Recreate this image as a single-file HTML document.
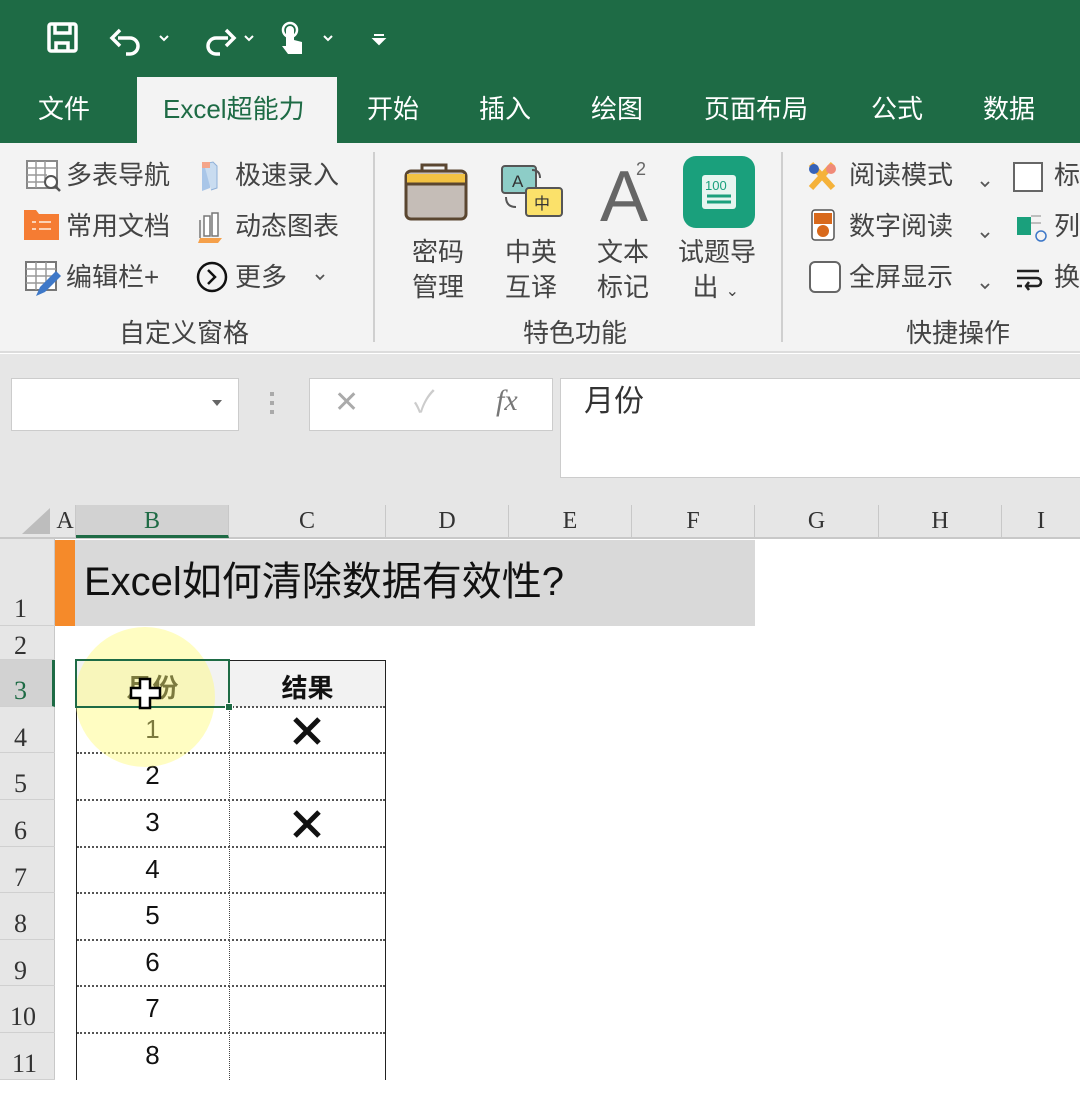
<!DOCTYPE html>
<html><head><meta charset="utf-8"><style>
*{margin:0;padding:0;box-sizing:border-box}
body{width:1080px;height:1080px;overflow:hidden;background:#fff;position:relative;font-family:"Liberation Sans","Noto Sans CJK SC",sans-serif;color:#333}
.a{position:absolute}
.t{position:absolute;white-space:nowrap;font-size:26px;line-height:30px}
.w{color:#fff}
.g{color:#444}
.ch{position:absolute;top:505px;height:33px;font-family:"Liberation Serif",serif;font-size:24px;line-height:33px;text-align:center;color:#333;border-right:1px solid #c8c8c8}
.rh{position:absolute;left:0;width:55px;font-family:"Liberation Serif",serif;font-size:26px;color:#333;padding-left:14px;border-bottom:1px solid #d0d0d0}
.cell{position:absolute;text-align:center;font-size:26px;color:#111}
</style></head><body>
<div class="a" style="left:0;top:0;width:1080px;height:143px;background:#1e6b45"></div>
<svg class="a" style="left:40px;top:18px" width="360" height="42" viewBox="0 0 360 42">
 <g fill="none" stroke="#fff" stroke-width="3.5">
  <rect x="9" y="6" width="27" height="27" rx="2"/>
  <path d="M15 6v9h15V6M16 33v-8h12v8"/>
  <path d="M78 20h12a8 8 0 0 1 0 16h-4M80 12l-8 8 8 8"/>
  <path d="M188 20h-12a8 8 0 0 0 0 16h4M186 12l8 8-8 8"/>
 </g>
 <g fill="none" stroke="#fff" stroke-width="2"><path d="M120 18l4 4 4-4M205 18l4 4 4-4M284 18l4 4 4-4"/></g>
 <path d="M246 28V12a4 4 0 0 1 8 0v10l8 2v12h-14l-6-8z" fill="#fff"/>
 <circle cx="250" cy="12" r="7" fill="none" stroke="#fff" stroke-width="2.5"/>
 <path d="M334 17h10M334 21l5 5 5-5z" stroke="#fff" stroke-width="2" fill="#fff"/>
</svg>
<div class="a" style="left:137px;top:77px;width:200px;height:70px;background:#f3f3f3"></div>
<div class="t w" style="left:38px;top:94px">文件</div>
<div class="t" style="left:163px;top:94px;color:#1e6b45">Excel超能力</div>
<div class="t w" style="left:367px;top:94px">开始</div>
<div class="t w" style="left:479px;top:94px">插入</div>
<div class="t w" style="left:591px;top:94px">绘图</div>
<div class="t w" style="left:704px;top:94px">页面布局</div>
<div class="t w" style="left:871px;top:94px">公式</div>
<div class="t w" style="left:983px;top:94px">数据</div>
<div class="a" style="left:0;top:143px;width:1080px;height:210px;background:#f3f3f3;border-bottom:2px solid #dcdcdc"></div>
<div class="a" style="left:373px;top:152px;width:2px;height:190px;background:#cfcfcf"></div>
<div class="a" style="left:781px;top:152px;width:2px;height:190px;background:#cfcfcf"></div>
<svg class="a" style="left:22px;top:158px" width="340" height="140" viewBox="0 0 340 140">
 <rect x="5" y="3" width="30" height="27" fill="#fff" stroke="#888" stroke-width="2"/>
 <path d="M5 10h30M5 17h20M5 24h18M14 3v27M23 3v18" stroke="#999" stroke-width="1.5"/>
 <circle cx="29" cy="24" r="6" fill="#fff" stroke="#555" stroke-width="2"/><path d="M33 28l5 5" stroke="#555" stroke-width="2.5"/>
 <path d="M2 52h12l3 4h20v26H2z" fill="#f57c33"/><path d="M10 64h4M17 64h12M10 71h4M17 71h12" stroke="#fcd2b5" stroke-width="2"/>
 <rect x="4" y="104" width="30" height="28" fill="#fff" stroke="#777" stroke-width="2"/><path d="M4 111h30M4 118h30M4 125h20M14 104v28M24 104v20" stroke="#999" stroke-width="1.5"/>
 <path d="M14 138l4-9 16-16 5 5-16 16z" fill="#3e78c8"/>
 <path d="M180 4l8 2v24l-8 3z" fill="#a9c6e8"/><path d="M182 6l9-2 4 4v22l-6 2" fill="#c9dcf0" stroke="#8fb0d8"/><path d="M180 4h8v6h-8z" fill="#f4a58a"/>
 <path d="M182 58h6v20h-6zM190 55h6v23h-6z" fill="#fff" stroke="#777" stroke-width="1.5"/><path d="M178 80h22l-4 5h-20z" fill="#f5a04a"/><path d="M178 80v-18" stroke="#777" stroke-width="1.5"/>
 <circle cx="190" cy="119" r="14" fill="none" stroke="#111" stroke-width="2.5"/><path d="M186 112l7 7-7 7" fill="none" stroke="#111" stroke-width="2.5"/>
 <path d="M294 117l4 4 4-4" fill="none" stroke="#555" stroke-width="1.8"/>
</svg>
<div class="t g" style="left:66px;top:160px">多表导航</div>
<div class="t g" style="left:66px;top:211px">常用文档</div>
<div class="t g" style="left:66px;top:262px">编辑栏+</div>
<div class="t g" style="left:235px;top:160px">极速录入</div>
<div class="t g" style="left:235px;top:211px">动态图表</div>
<div class="t g" style="left:235px;top:262px">更多</div>
<div class="t g" style="left:119px;top:318px">自定义窗格</div>
<svg class="a" style="left:400px;top:155px" width="360" height="80" viewBox="0 0 360 80">
 <path d="M22 16v-6h24v6" fill="none" stroke="#5a4630" stroke-width="3"/>
 <rect x="6" y="16" width="60" height="48" rx="5" fill="#c5bdb7" stroke="#5a4630" stroke-width="3"/>
 <path d="M7 19h58v10H7z" fill="#f2c243"/><path d="M6 29h60" stroke="#5a4630" stroke-width="3"/>
 <rect x="102" y="11" width="34" height="27" rx="3" fill="#8dcdc7" stroke="#555" stroke-width="2"/>
 <text x="112" y="32" font-size="17" font-family="Liberation Sans" fill="#333">A</text>
 <rect x="126" y="33" width="36" height="28" rx="3" fill="#fbe16a" stroke="#555" stroke-width="2"/>
 <text x="134" y="54" font-size="16" font-family="Noto Sans CJK SC" fill="#333">中</text>
 <path d="M132 15q8 0 8 8M106 42q0 10 10 10" fill="none" stroke="#555" stroke-width="2"/>
 <text x="200" y="66" font-size="72" font-family="Liberation Sans" fill="#666">A</text>
 <text x="236" y="20" font-size="18" font-family="Liberation Sans" fill="#666">2</text>
 <rect x="283" y="1" width="72" height="72" rx="13" fill="#1aa07c"/>
 <rect x="302" y="20" width="34" height="34" rx="3" fill="#e6f5f0"/>
 <text x="305" y="35" font-size="13" font-family="Liberation Sans" fill="#1aa07c">100</text>
 <path d="M307 41h24M307 47h24" stroke="#1aa07c" stroke-width="3"/>
</svg>
<div class="t g" style="left:412px;top:235px;line-height:35px">密码<br>管理</div>
<div class="t g" style="left:505px;top:235px;line-height:35px">中英<br>互译</div>
<div class="t g" style="left:597px;top:235px;line-height:35px">文本<br>标记</div>
<div class="t g" style="left:678px;top:235px;line-height:35px">试题导<br>&nbsp;&nbsp;出 <span style="font-size:16px">⌄</span></div>
<div class="t g" style="left:523px;top:318px">特色功能</div>
<svg class="a" style="left:805px;top:158px" width="275" height="140" viewBox="0 0 275 140">
 <path d="M6 6l22 24M28 6L6 30" stroke="#f5b23a" stroke-width="6"/><circle cx="9" cy="11" r="5" fill="#3662b8"/><circle cx="26" cy="11" r="5" fill="#f08a78"/>
 <rect x="7" y="52" width="22" height="30" rx="3" fill="#fff" stroke="#555" stroke-width="1.5"/><rect x="9" y="55" width="18" height="11" fill="#d8691c"/><circle cx="18" cy="73" r="6" fill="#d8691c"/>
 <rect x="5" y="104" width="30" height="30" rx="5" fill="#fff" stroke="#666" stroke-width="2"/>
 <path d="M176 24l4 4 4-4M176 75l4 4 4-4M176 126l4 4 4-4" fill="none" stroke="#555" stroke-width="1.8"/>
 <rect x="209" y="5" width="28" height="28" fill="#fff" stroke="#666" stroke-width="2"/>
 <rect x="212" y="59" width="14" height="18" fill="#1aa07c"/><path d="M226 58h10M226 65h10" stroke="#888"/><circle cx="236" cy="78" r="5" fill="none" stroke="#3e78c8" stroke-width="1.5"/>
 <path d="M212 113h22M212 120h20a4 4 0 0 1 0 8h-10M212 128h5M224 124l-3 4 3 4" fill="none" stroke="#222" stroke-width="2.5"/>
</svg>
<div class="t g" style="left:849px;top:160px">阅读模式</div>
<div class="t g" style="left:849px;top:211px">数字阅读</div>
<div class="t g" style="left:849px;top:262px">全屏显示</div>
<div class="t g" style="left:1054px;top:160px">标</div>
<div class="t g" style="left:1054px;top:211px">列</div>
<div class="t g" style="left:1054px;top:262px">换</div>
<div class="t g" style="left:906px;top:318px">快捷操作</div>
<div class="a" style="left:0;top:354px;width:1080px;height:151px;background:#e6e6e6"></div>
<div class="a" style="left:11px;top:378px;width:228px;height:53px;background:#fff;border:1px solid #ccc"></div>
<div class="a" style="left:212px;top:400px;width:0;height:0;border:5px solid transparent;border-top:6px solid #666"></div>
<div class="a" style="left:270px;top:392px;width:4px;height:24px;background:repeating-linear-gradient(#aaa 0 4px,transparent 4px 9px)"></div>
<div class="a" style="left:309px;top:378px;width:244px;height:53px;background:#fff;border:1px solid #ccc"></div>
<div class="t" style="left:334px;top:388px;font-size:30px;color:#aaa">✕</div>
<div class="t" style="left:414px;top:388px;font-size:30px;color:#ccc">✓</div>
<div class="t" style="left:496px;top:386px;font-size:30px;font-family:'Liberation Serif',serif;font-style:italic;color:#777">fx</div>
<div class="a" style="left:560px;top:378px;width:530px;height:100px;background:#fff;border:1px solid #ccc"></div>
<div class="t" style="left:584px;top:387px;font-size:30px;color:#333">月份</div>
<div class="a" style="left:0;top:505px;width:1080px;height:34px;background:#e6e6e6;border-bottom:2px solid #c8c8c8"></div>
<div class="a" style="left:22px;top:508px;width:0;height:0;border-left:28px solid transparent;border-bottom:26px solid #bdbdbd"></div>
<div class="ch" style="left:55px;width:21px">A</div>
<div class="ch" style="left:76px;width:153px;background:#d2d2d2;color:#1e6b45;border-bottom:3px solid #1e6b45">B</div>
<div class="ch" style="left:229px;width:157px">C</div>
<div class="ch" style="left:386px;width:123px">D</div>
<div class="ch" style="left:509px;width:123px">E</div>
<div class="ch" style="left:632px;width:123px">F</div>
<div class="ch" style="left:755px;width:124px">G</div>
<div class="ch" style="left:879px;width:123px">H</div>
<div class="ch" style="left:1002px;width:78px;border:none">I</div>
<div class="a" style="left:0;top:539px;width:55px;height:541px;background:#e6e6e6;border-right:1px solid #c8c8c8"></div>
<div class="rh" style="top:539px;height:87px;line-height:140px">1</div>
<div class="rh" style="top:626px;height:34px;line-height:40px">2</div>
<div class="rh" style="top:660px;height:47px;line-height:62px;background:#d2d2d2;color:#1e6b45;border-right:3px solid #1e6b45">3</div>
<div class="rh" style="top:707px;height:46px;line-height:62px">4</div>
<div class="rh" style="top:753px;height:47px;line-height:62px">5</div>
<div class="rh" style="top:800px;height:47px;line-height:62px">6</div>
<div class="rh" style="top:847px;height:46px;line-height:62px">7</div>
<div class="rh" style="top:893px;height:47px;line-height:62px">8</div>
<div class="rh" style="top:940px;height:46px;line-height:62px">9</div>
<div class="rh" style="top:986px;height:47px;line-height:62px;padding-left:10px">10</div>
<div class="rh" style="top:1033px;height:47px;line-height:62px;padding-left:12px">11</div>
<div class="a" style="left:55px;top:540px;width:700px;height:86px;background:#d9d9d9"></div>
<div class="a" style="left:55px;top:540px;width:20px;height:86px;background:#f58a2a"></div>
<div class="t" style="left:84px;top:559px;font-size:40px;line-height:46px;color:#111">Excel如何清除数据有效性?</div>
<div class="a" style="left:76px;top:660px;width:310px;height:420px;border:1.5px solid #222;border-bottom:none"></div>
<div class="a" style="left:77px;top:661px;width:308px;height:46px;background:#f2f2f2"></div>
<div class="a" style="left:229px;top:660px;width:0;height:420px;border-left:1.5px dotted #444"></div>
<div class="a" style="left:229px;top:660px;width:0;height:47px;border-left:1.5px solid #222"></div>
<div class="a" style="left:77px;top:706px;width:308px;border-top:2px dotted #555"></div>
<div class="a" style="left:77px;top:752px;width:308px;border-top:2px dotted #555"></div>
<div class="a" style="left:77px;top:799px;width:308px;border-top:2px dotted #555"></div>
<div class="a" style="left:77px;top:846px;width:308px;border-top:2px dotted #555"></div>
<div class="a" style="left:77px;top:892px;width:308px;border-top:2px dotted #555"></div>
<div class="a" style="left:77px;top:939px;width:308px;border-top:2px dotted #555"></div>
<div class="a" style="left:77px;top:985px;width:308px;border-top:2px dotted #555"></div>
<div class="a" style="left:77px;top:1032px;width:308px;border-top:2px dotted #555"></div>
<div class="cell" style="left:229px;top:668px;width:157px;font-weight:bold">结果</div>
<div class="cell" style="left:76px;top:668px;width:153px;font-weight:bold">月份</div>
<div class="cell" style="left:76px;top:714px;width:153px">1</div>
<div class="cell" style="left:76px;top:760px;width:153px">2</div>
<div class="cell" style="left:76px;top:807px;width:153px">3</div>
<div class="cell" style="left:76px;top:854px;width:153px">4</div>
<div class="cell" style="left:76px;top:900px;width:153px">5</div>
<div class="cell" style="left:76px;top:947px;width:153px">6</div>
<div class="cell" style="left:76px;top:993px;width:153px">7</div>
<div class="cell" style="left:76px;top:1040px;width:153px">8</div>
<svg class="a" style="left:290px;top:715px" width="34" height="130" viewBox="0 0 34 130"><path d="M5 4l24 24M29 4L5 28M5 97l24 24M29 97L5 121" stroke="#111" stroke-width="5"/></svg>
<div class="a" style="left:75px;top:627px;width:140px;height:140px;border-radius:50%;background:rgba(255,250,120,0.45)"></div>
<div class="a" style="left:75px;top:659px;width:155px;height:49px;border:2px solid #1e6b45"></div>
<div class="a" style="left:225px;top:703px;width:8px;height:8px;background:#1e6b45;border:1px solid #fff"></div>
<svg class="a" style="left:128px;top:676px" width="36" height="36" viewBox="0 0 36 36"><path d="M12 3h10v9h10v10H22v10H12V22H3V12h9z" fill="#fff" stroke="#000" stroke-width="2.5"/></svg>
</body></html>
